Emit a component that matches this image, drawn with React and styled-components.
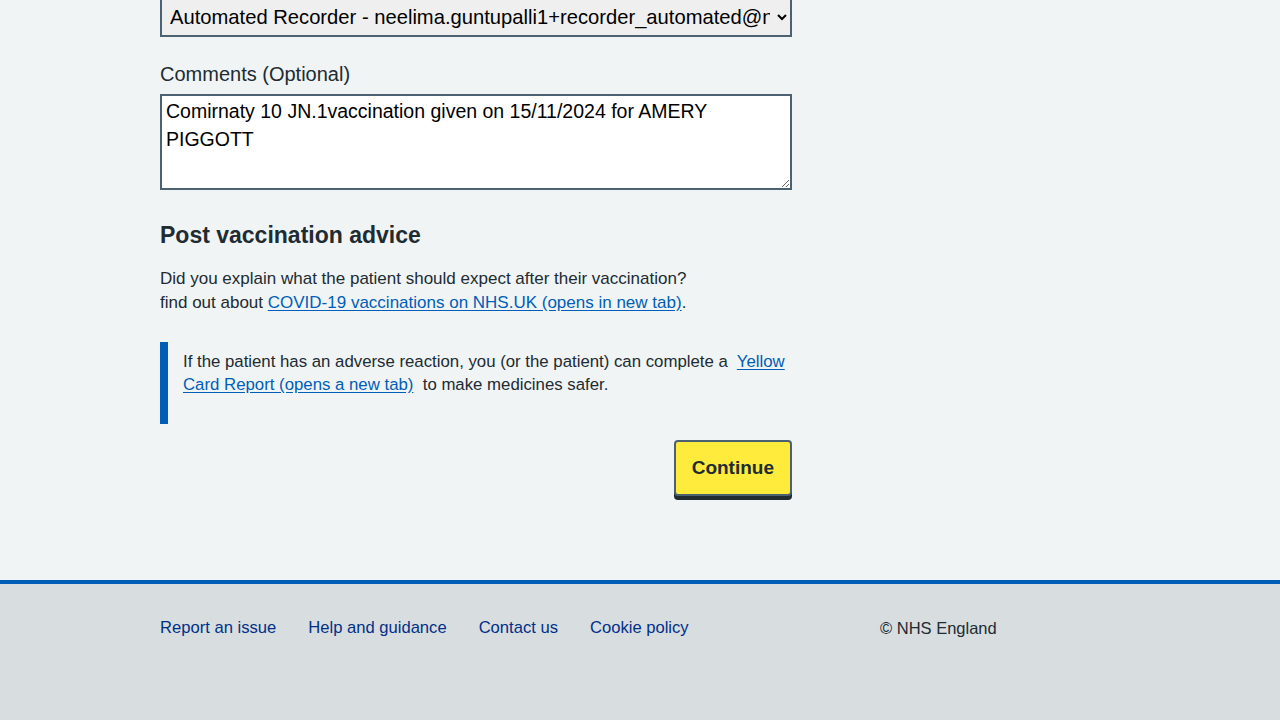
import React from 'react';
import styled, { createGlobalStyle } from 'styled-components';

const GlobalStyle = createGlobalStyle`
  html, body {
    margin: 0;
    padding: 0;
    background-color: #f0f4f5;
    font-family: "Liberation Sans", Arial, sans-serif;
    color: #212b32;
  }
`;

const Page = styled.div`
  min-height: 720px;
  display: flex;
  flex-direction: column;
  overflow: hidden;
`;

const Main = styled.main`
  width: 960px;
  margin: -3px auto 0;
  padding-bottom: 80px;
`;

const Column = styled.div`
  width: 632px;
`;

const FormGroup = styled.div`
  margin-bottom: 23px;
`;

const Select = styled.select`
  display: block;
  width: 100%;
  height: 40px;
  box-sizing: border-box;
  border: 2px solid #4c6272;
  border-radius: 0;
  background-color: #efefef;
  font-family: inherit;
  font-size: 20.2px;
  color: #000;
  padding: 0 4px 0 4px;
`;

const Label = styled.label`
  display: block;
  font-size: 20px;
  line-height: 28px;
  margin-bottom: 6px;
  color: #212b32;
`;

const Textarea = styled.textarea`
  display: block;
  width: 100%;
  height: 96px;
  box-sizing: border-box;
  border: 2px solid #4c6272;
  border-radius: 0;
  background: #fff;
  font-family: inherit;
  font-size: 19.5px;
  line-height: 28px;
  color: #000;
  padding: 1px 4px;
  resize: vertical;
`;

const Heading = styled.h2`
  font-size: 23px;
  font-weight: 700;
  line-height: 32px;
  margin: 29px 0 16px;
  color: #212b32;
`;

const Paragraph = styled.p`
  font-size: 17px;
  line-height: 24px;
  margin: 0 0 27px;
  color: #212b32;
`;

const Link = styled.a`
  color: #005eb8;
  text-decoration: underline;
  text-underline-offset: 2px;
`;

const Inset = styled.div`
  border-left: 8px solid #005eb8;
  padding: 8px 0 28px 15px;
  margin-bottom: 16px;
  font-size: 16.8px;
  line-height: 23px;
  color: #212b32;
`;

const Actions = styled.div`
  display: flex;
  justify-content: flex-end;
`;

const Button = styled.button`
  font-family: inherit;
  font-size: 19px;
  font-weight: 700;
  color: #212b32;
  background-color: #ffeb3b;
  border: 2px solid #4c6272;
  border-radius: 4px;
  box-shadow: 0 4px 0 #212b32;
  height: 56px;
  padding: 0 16px;
  cursor: pointer;
`;

const Footer = styled.footer`
  margin-top: auto;
  border-top: 4px solid #005eb8;
  background-color: #d8dde0;
  height: 136px;
`;

const FooterInner = styled.div`
  width: 960px;
  margin: 0 auto;
  display: flex;
  padding-top: 32px;
`;

const FooterList = styled.ul`
  list-style: none;
  margin: 0;
  padding: 0;
  width: 720px;
  display: flex;
  gap: 32px;
`;

const FooterLink = styled.a`
  color: #003087;
  font-size: 16.6px;
  line-height: 24px;
  text-decoration: none;
`;

const Copyright = styled.p`
  margin: 0;
  font-size: 16.5px;
  line-height: 24px;
  color: #212b32;
`;

export default function App() {
  return (
    <Page>
      <GlobalStyle />
      <Main>
        <Column>
          <FormGroup>
            <Select defaultValue="rec">
              <option value="rec">
                Automated Recorder - neelima.guntupalli1+recorder_automated@nhs.net
              </option>
            </Select>
          </FormGroup>
          <FormGroup>
            <Label htmlFor="comments">Comments (Optional)</Label>
            <Textarea
              id="comments"
              defaultValue="Comirnaty 10 JN.1vaccination given on 15/11/2024 for AMERY PIGGOTT"
            />
          </FormGroup>
          <Heading>Post vaccination advice</Heading>
          <Paragraph>
            Did you explain what the patient should expect after their vaccination?
            <br />
            find out about <Link href="#">COVID-19 vaccinations on NHS.UK (opens in new tab)</Link>.
          </Paragraph>
          <Inset>
            If the patient has an adverse reaction, you (or the patient) can complete a&nbsp;{' '}
            <Link href="#">Yellow Card Report (opens a new tab)</Link>&nbsp; to make medicines safer.
          </Inset>
          <Actions>
            <Button>Continue</Button>
          </Actions>
        </Column>
      </Main>
      <Footer>
        <FooterInner>
          <FooterList>
            <li><FooterLink href="#">Report an issue</FooterLink></li>
            <li><FooterLink href="#">Help and guidance</FooterLink></li>
            <li><FooterLink href="#">Contact us</FooterLink></li>
            <li><FooterLink href="#">Cookie policy</FooterLink></li>
          </FooterList>
          <Copyright>© NHS England</Copyright>
        </FooterInner>
      </Footer>
    </Page>
  );
}
